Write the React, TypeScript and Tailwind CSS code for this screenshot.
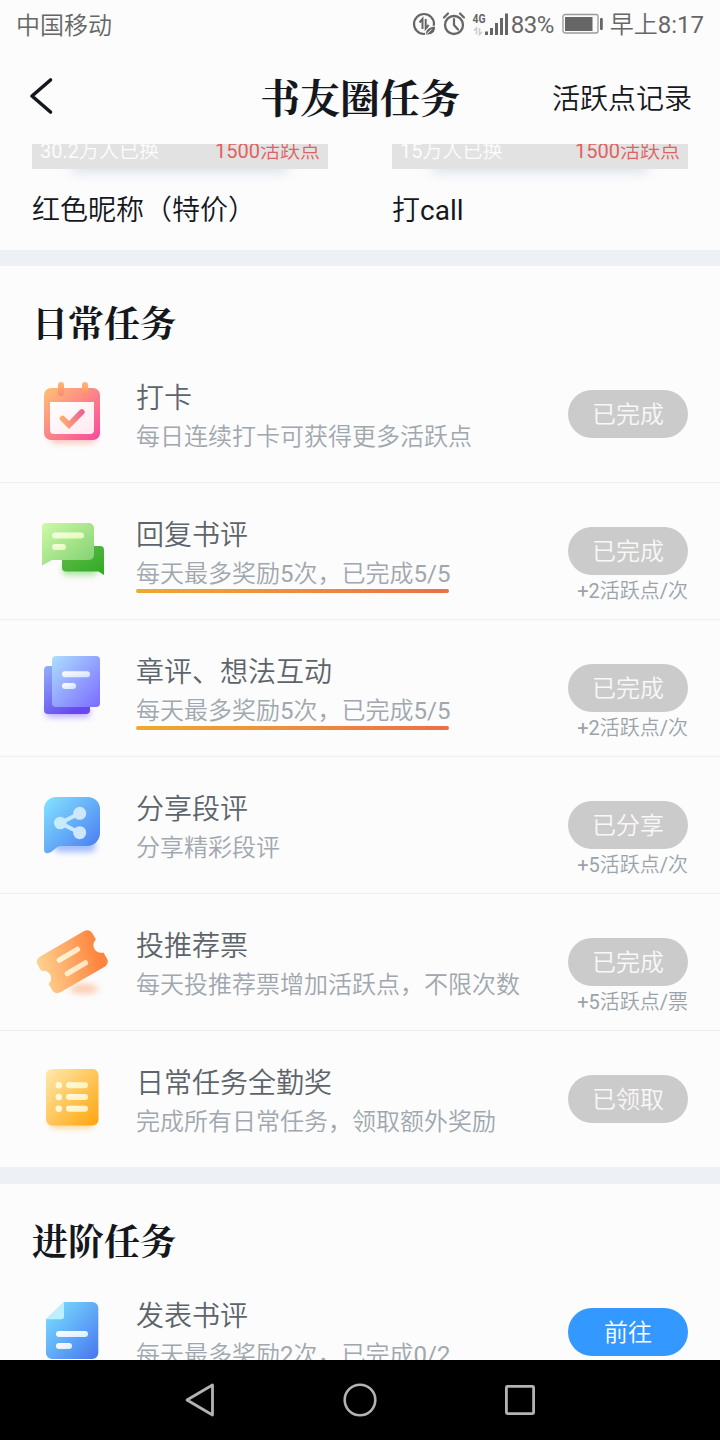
import type { ReactNode } from "react";

const SERIF = "font-['Noto_Serif_CJK_SC','Noto_Serif_SC','Source_Han_Serif_SC','Noto_Sans_CJK_SC',serif] font-bold";

function Grad({ id, from, to }: { id: string; from: string; to: string }) {
  return (
    <linearGradient id={id} x1="0" y1="0" x2="1" y2="1">
      <stop offset="0" stopColor={from} />
      <stop offset="1" stopColor={to} />
    </linearGradient>
  );
}

function IconBox({ children }: { children: ReactNode }) {
  return (
    <svg width="80" height="100" viewBox="0 0 80 100" fill="none" className="mt-5 block shrink-0">
      <defs>
        <filter id="soft" x="-50%" y="-100%" width="200%" height="300%">
          <feGaussianBlur stdDeviation="3" />
        </filter>
      </defs>
      {children}
    </svg>
  );
}

function CalendarIcon() {
  return (
    <IconBox>
      <defs>
        <Grad id="cal" from="#ffc272" to="#f9479e" />
        <linearGradient id="peg" x1="0" y1="0" x2="0" y2="1">
          <stop offset="0" stopColor="#ffb972" />
          <stop offset="1" stopColor="#fb8a6c" />
        </linearGradient>
        <Grad id="calIn" from="#ffffff" to="#ffe9ef" />
        <linearGradient id="calCheck" x1="27" y1="54" x2="53" y2="47" gradientUnits="userSpaceOnUse">
          <stop offset="0" stopColor="#ffb46c" />
          <stop offset="1" stopColor="#f05a98" />
        </linearGradient>
      </defs>
      <rect x="18" y="66" width="46" height="11" rx="5" fill="#fb9a8b" opacity=".6" filter="url(#soft)" />
      <rect x="12" y="22" width="56" height="52" rx="7" fill="url(#cal)" />
      <path d="M18 36h44v28a4 4 0 0 1-4 4H22a4 4 0 0 1-4-4Z" fill="url(#calIn)" />
      <rect x="26" y="16" width="6" height="14" rx="3" fill="url(#peg)" />
      <rect x="50" y="16" width="6" height="14" rx="3" fill="url(#peg)" />
      <path d="M30.500 52.500 37 59 49.800 46" stroke="url(#calCheck)" strokeWidth="5.600" strokeLinecap="round" />
    </IconBox>
  );
}

function ChatIcon() {
  return (
    <IconBox>
      <defs>
        <Grad id="chatF" from="#cdfaa8" to="#7fcf70" />
        <Grad id="chatB" from="#64bb4b" to="#2eab23" />
        <Grad id="chatL" from="#f6ffe9" to="#e2fdb0" />
      </defs>
      <rect x="30" y="62" width="36" height="10" rx="5" fill="#6fd05a" opacity=".6" filter="url(#soft)" />
      <path d="M34 43h34a4 4 0 0 1 4 4v25l-5.500-3.500H34a4 4 0 0 1-4-4V47a4 4 0 0 1 4-4Z" fill="url(#chatB)" />
      <path d="M14 20h43a5 5 0 0 1 5 5v27a5 5 0 0 1-5 5H20L10 62.500V24a4 4 0 0 1 4-4Z" fill="url(#chatF)" />
      <rect x="20" y="29.500" width="32" height="6" rx="3" fill="url(#chatL)" />
      <rect x="20" y="41" width="14" height="6" rx="3" fill="url(#chatL)" />
    </IconBox>
  );
}

function PagesIcon() {
  return (
    <IconBox>
      <defs>
        <Grad id="pgF" from="#addeff" to="#7a6bff" />
        <linearGradient id="pgB" x1="0" y1="0" x2=".6" y2="1">
          <stop offset="0" stopColor="#90b0fa" />
          <stop offset="1" stopColor="#6648ee" />
        </linearGradient>
        <Grad id="pgL" from="#ffffff" to="#d3e1ff" />
      </defs>
      <rect x="14" y="68" width="44" height="9" rx="4" fill="#8a70ff" opacity=".6" filter="url(#soft)" />
      <rect x="12" y="26" width="46" height="48" rx="4" fill="url(#pgB)" />
      <rect x="20" y="16" width="48" height="51" rx="4" fill="url(#pgF)" />
      <rect x="30" y="31.300" width="28" height="6" rx="3" fill="url(#pgL)" />
      <rect x="30" y="43" width="14" height="6" rx="3" fill="url(#pgL)" />
    </IconBox>
  );
}

function ShareIcon() {
  return (
    <IconBox>
      <defs>
        <Grad id="sh" from="#84e4ff" to="#4677f0" />
        <linearGradient id="shL" x1="22" y1="0" x2="54" y2="0" gradientUnits="userSpaceOnUse">
          <stop offset="0" stopColor="#c3ecff" />
          <stop offset="1" stopColor="#cfe6ff" />
        </linearGradient>
      </defs>
      <rect x="22" y="63" width="42" height="12" rx="6" fill="#6f9bff" opacity=".65" filter="url(#soft)" />
      <path d="M24 20h32a12 12 0 0 1 12 12v24a13 13 0 0 1-13 13H29c-3 0-5 2-8 4.500-4 3.500-9 4-9-1V32a12 12 0 0 1 12-12Z" fill="url(#sh)" />
      <path d="M47.700 36.300 28.300 46l19.400 9.700" stroke="url(#shL)" strokeWidth="4" />
      <circle cx="28.300" cy="46" r="6.300" fill="url(#shL)" />
      <circle cx="47.700" cy="36.300" r="6.500" fill="url(#shL)" />
      <circle cx="47.700" cy="55.700" r="6.500" fill="url(#shL)" />
    </IconBox>
  );
}

function TicketIcon() {
  return (
    <IconBox>
      <defs>
        <linearGradient id="tk" x1="0" y1="0" x2="1" y2=".2">
          <stop offset="0" stopColor="#ffd492" />
          <stop offset="1" stopColor="#ff853f" />
        </linearGradient>
        <linearGradient id="tkL" x1="27" y1="0" x2="54" y2="0" gradientUnits="userSpaceOnUse">
          <stop offset="0" stopColor="#fff4d8" />
          <stop offset="1" stopColor="#ffe5c0" />
        </linearGradient>
      </defs>
      <ellipse cx="52" cy="75" rx="14" ry="5" fill="#ff9a66" opacity=".5" filter="url(#soft)" />
      <path
        transform="translate(40.300 47.700) rotate(-30)"
        d="M-25.600-20.600h51.200a6 6 0 0 1 6 6v7.100c-3.800 1-6 3.900-6 7.500s2.200 6.500 6 7.500v7.100a6 6 0 0 1-6 6h-51.200a6 6 0 0 1-6-6V7.500c3.800-1 6-3.900 6-7.500s-2.200-6.500-6-7.500v-7.100a6 6 0 0 1 6-6Z"
        fill="url(#tk)"
      />
      <path d="M27.500 46 45.300 35.500M35.500 59.500 53.300 49" stroke="url(#tkL)" strokeWidth="5.500" strokeLinecap="round" />
    </IconBox>
  );
}

function ListIcon() {
  return (
    <IconBox>
      <defs>
        <Grad id="ls" from="#ffe9ad" to="#ffa40a" />
        <Grad id="lsL" from="#fffbe8" to="#fff0b0" />
      </defs>
      <rect x="18" y="67" width="44" height="10" rx="5" fill="#ffbf52" opacity=".65" filter="url(#soft)" />
      <rect x="14" y="18" width="52.500" height="56.500" rx="6" fill="url(#ls)" />
      {[34.3, 46, 57.7].map((y) => (
        <g key={y}>
          <circle cx="26.800" cy={y} r="3.200" fill="#fff8de" />
          <rect x="34" y={y - 3} width="22" height="6" rx="3" fill="url(#lsL)" />
        </g>
      ))}
    </IconBox>
  );
}

function DocIcon() {
  return (
    <IconBox>
      <defs>
        <Grad id="dc" from="#7be4ff" to="#4875ee" />
        <Grad id="dcL" from="#ffffff" to="#d9ecff" />
      </defs>
      <path d="M32 18h28.300a6 6 0 0 1 6 6v45a6 6 0 0 1-6 6H20a6 6 0 0 1-6-6V35.300Z" fill="url(#dc)" />
      <path d="M32 18v14.300a3 3 0 0 1-3 3H14Z" fill="#bdf0ff" />
      <rect x="24" y="47" width="32" height="6" rx="3" fill="url(#dcL)" />
      <rect x="24" y="59" width="16" height="6" rx="3" fill="url(#dcL)" />
    </IconBox>
  );
}

type Task = {
  title: string;
  sub: string;
  button: string;
  reward?: string;
  underline?: boolean;
  active?: boolean;
  icon: ReactNode;
};

const daily: Task[] = [
  { title: "打卡", sub: "每日连续打卡可获得更多活跃点", button: "已完成", icon: <CalendarIcon /> },
  { title: "回复书评", sub: "每天最多奖励5次，已完成5/5", button: "已完成", reward: "+2活跃点/次", underline: true, icon: <ChatIcon /> },
  { title: "章评、想法互动", sub: "每天最多奖励5次，已完成5/5", button: "已完成", reward: "+2活跃点/次", underline: true, icon: <PagesIcon /> },
  { title: "分享段评", sub: "分享精彩段评", button: "已分享", reward: "+5活跃点/次", icon: <ShareIcon /> },
  { title: "投推荐票", sub: "每天投推荐票增加活跃点，不限次数", button: "已完成", reward: "+5活跃点/票", icon: <TicketIcon /> },
  { title: "日常任务全勤奖", sub: "完成所有日常任务，领取额外奖励", button: "已领取", icon: <ListIcon /> },
];

const advanced: Task[] = [
  { title: "发表书评", sub: "每天最多奖励2次，已完成0/2", button: "前往", active: true, icon: <DocIcon /> },
];

function TaskRow({ task, last }: { task: Task; last: boolean }) {
  return (
    <div className={`flex items-start px-8 ${last ? "h-[136px]" : "h-[137px] border-b border-[#eeeff0]"}`}>
      {task.icon}
      <div className="ml-6 flex grow flex-col items-start pt-8">
        <div className="h-10 text-[28px] leading-[42px] text-[#5d646b]">{task.title}</div>
        <div className="h-[34px] text-[24px] leading-[38px] whitespace-nowrap text-[#a0a7ae]">{task.sub}</div>
        {task.underline && <div className="h-1 w-[313px] rounded-full bg-linear-to-r from-[#efa92d] to-[#ea7047]" />}
      </div>
      <div className="flex w-[120px] shrink-0 flex-col items-end pt-11">
        <div
          className={`h-12 w-[120px] rounded-full text-center text-[24px] leading-[50px] ${
            task.active ? "bg-[#3398ff] text-white" : "bg-[#cbcbcb] text-[#f8f8f8]"
          }`}
        >
          {task.button}
        </div>
        {task.reward && <div className="text-[20px] leading-[32px] whitespace-nowrap text-[#9ba3aa]">{task.reward}</div>}
      </div>
    </div>
  );
}

function TaskSection({ title, tasks }: { title: string; tasks: Task[] }) {
  return (
    <section>
      <h2 className={`h-20 px-8 pt-8 text-[36px] leading-[48px] text-[#14181d] ${SERIF}`}>{title}</h2>
      {tasks.map((t, i) => (
        <TaskRow key={t.title} task={t} last={i === tasks.length - 1} />
      ))}
    </section>
  );
}

function Reward({ count, name }: { count: string; name: string }) {
  return (
    <div className="w-[296px]">
      <div className="relative h-[25px]">
        <div className="absolute right-10 bottom-1 left-10 h-3 rounded-full shadow-[0_7px_12px_1px_rgba(150,170,195,0.3)]" />
        <div className="relative flex h-[25px] justify-between overflow-hidden bg-[#e2e2e2] px-2 text-[20px]">
          <span className="-mt-2 leading-[30px] text-[#fcfcfc]">{count}</span>
          <span className="-mt-2 leading-[30px] text-[#e0625f]">1500活跃点</span>
        </div>
      </div>
      <div className="pt-5 text-[28px] leading-[43px] text-[#14181d]">{name}</div>
    </div>
  );
}

function StatusBar() {
  return (
    <div className="flex h-12 shrink-0 items-center pr-4 pl-4 text-[24px] leading-6 text-[#666]">
      <span className="grow pt-[3px]">中国移动</span>
      <svg width="100" height="32" viewBox="410 8 100 32" fill="none" className="shrink-0">
        <circle cx="423" cy="24" r="10" stroke="#666" strokeWidth="2.200" />
        <path d="M421.500 29V19l-3 3.500M424.700 19v9.500l3-3.500" stroke="#666" strokeWidth="2" />
        <path d="M424.500 35c-.5-5 3-8.500 10-9 .5 6-3 9.500-10 9Z" fill="#666" stroke="#fcfcfc" strokeWidth="1" />
        <path d="m425.500 34 5-4.500" stroke="#fcfcfc" />
        <circle cx="453" cy="25" r="9" stroke="#666" strokeWidth="2.300" />
        <path d="M453 19v6l4 4.500M443 17.500l4-4M463 17.500l-4-4" stroke="#666" strokeWidth="2.200" strokeLinecap="round" />
        <text x="471.500" y="23" fontSize="12.500" fontWeight="700" fill="#666" textLength="13" lengthAdjust="spacingAndGlyphs" fontFamily="Roboto, sans-serif">4G</text>
        <path d="M475.500 34.500V28l-2.500 2.500M478.500 28v6.500l2.500-2.500" stroke="#ccc" strokeWidth="1.600" />
        <path d="M485.500 31.500V35M490.500 28v7M495.500 23v12M500.500 18v17M505.500 13.500V35" stroke="#666" strokeWidth="3" />
      </svg>
      <span className="w-[51px] shrink-0 pt-[2px] tracking-[-0.500px]">83%</span>
      <svg width="42" height="22" viewBox="0 0 42 22" fill="none" className="shrink-0">
        <rect x="1" y="1.500" width="35" height="18.500" rx="2" stroke="#999" strokeWidth="1.300" />
        <rect x="3" y="4" width="27.500" height="14" fill="#666" />
        <rect x="38" y="5" width="2.800" height="12" rx="1" fill="#666" />
      </svg>
      <span className="ml-[6px] shrink-0 pt-[2px]">早上8:17</span>
    </div>
  );
}

export default function App() {
  return (
    <div className="flex h-[1440px] w-[720px] flex-col overflow-hidden bg-[#fcfcfc] font-['Roboto','Noto_Sans_CJK_SC_DemiLight','Noto_Sans_CJK_SC',sans-serif] font-normal">
      <StatusBar />
      <header className="flex h-24 shrink-0 items-center pr-7 pl-7">
        <div className="w-[140px]">
          <svg width="28" height="40" viewBox="0 0 28 40" fill="none">
            <path d="M22.500 4 4 20l18.500 16" stroke="#14181d" strokeWidth="3.600" strokeLinecap="round" strokeLinejoin="round" />
          </svg>
        </div>
        <h1 className={`grow text-center text-[40px] leading-[56px] text-[#14181d] ${SERIF}`}>书友圈任务</h1>
        <div className="w-[140px] pt-2 text-[28px] leading-10 whitespace-nowrap text-[#14181d]">活跃点记录</div>
      </header>
      <main className="min-h-0 grow overflow-hidden">
        <div className="flex h-[106px] gap-16 px-8">
          <Reward count="30.2万人已换" name="红色昵称（特价）" />
          <Reward count="15万人已换" name="打call" />
        </div>
        <div className="h-4 bg-[#edf1f5]" />
        <TaskSection title="日常任务" tasks={daily} />
        <div className="h-[17px] bg-[#edf1f5]" />
        <TaskSection title="进阶任务" tasks={advanced} />
      </main>
      <nav className="flex h-20 shrink-0 items-center justify-center gap-[120px] bg-black">
        <svg width="40" height="40" viewBox="0 0 40 40" fill="none" stroke="#b3b3b3" strokeWidth="2.800" strokeLinejoin="round">
          <path d="M7 20 32.500 5v30Z" />
        </svg>
        <svg width="40" height="40" viewBox="0 0 40 40" fill="none" stroke="#b3b3b3" strokeWidth="2.600">
          <circle cx="20" cy="20" r="15.300" />
        </svg>
        <svg width="40" height="40" viewBox="0 0 40 40" fill="none" stroke="#b3b3b3" strokeWidth="2.800">
          <rect x="6.400" y="6.400" width="27.200" height="27.200" rx="1" />
        </svg>
      </nav>
    </div>
  );
}
